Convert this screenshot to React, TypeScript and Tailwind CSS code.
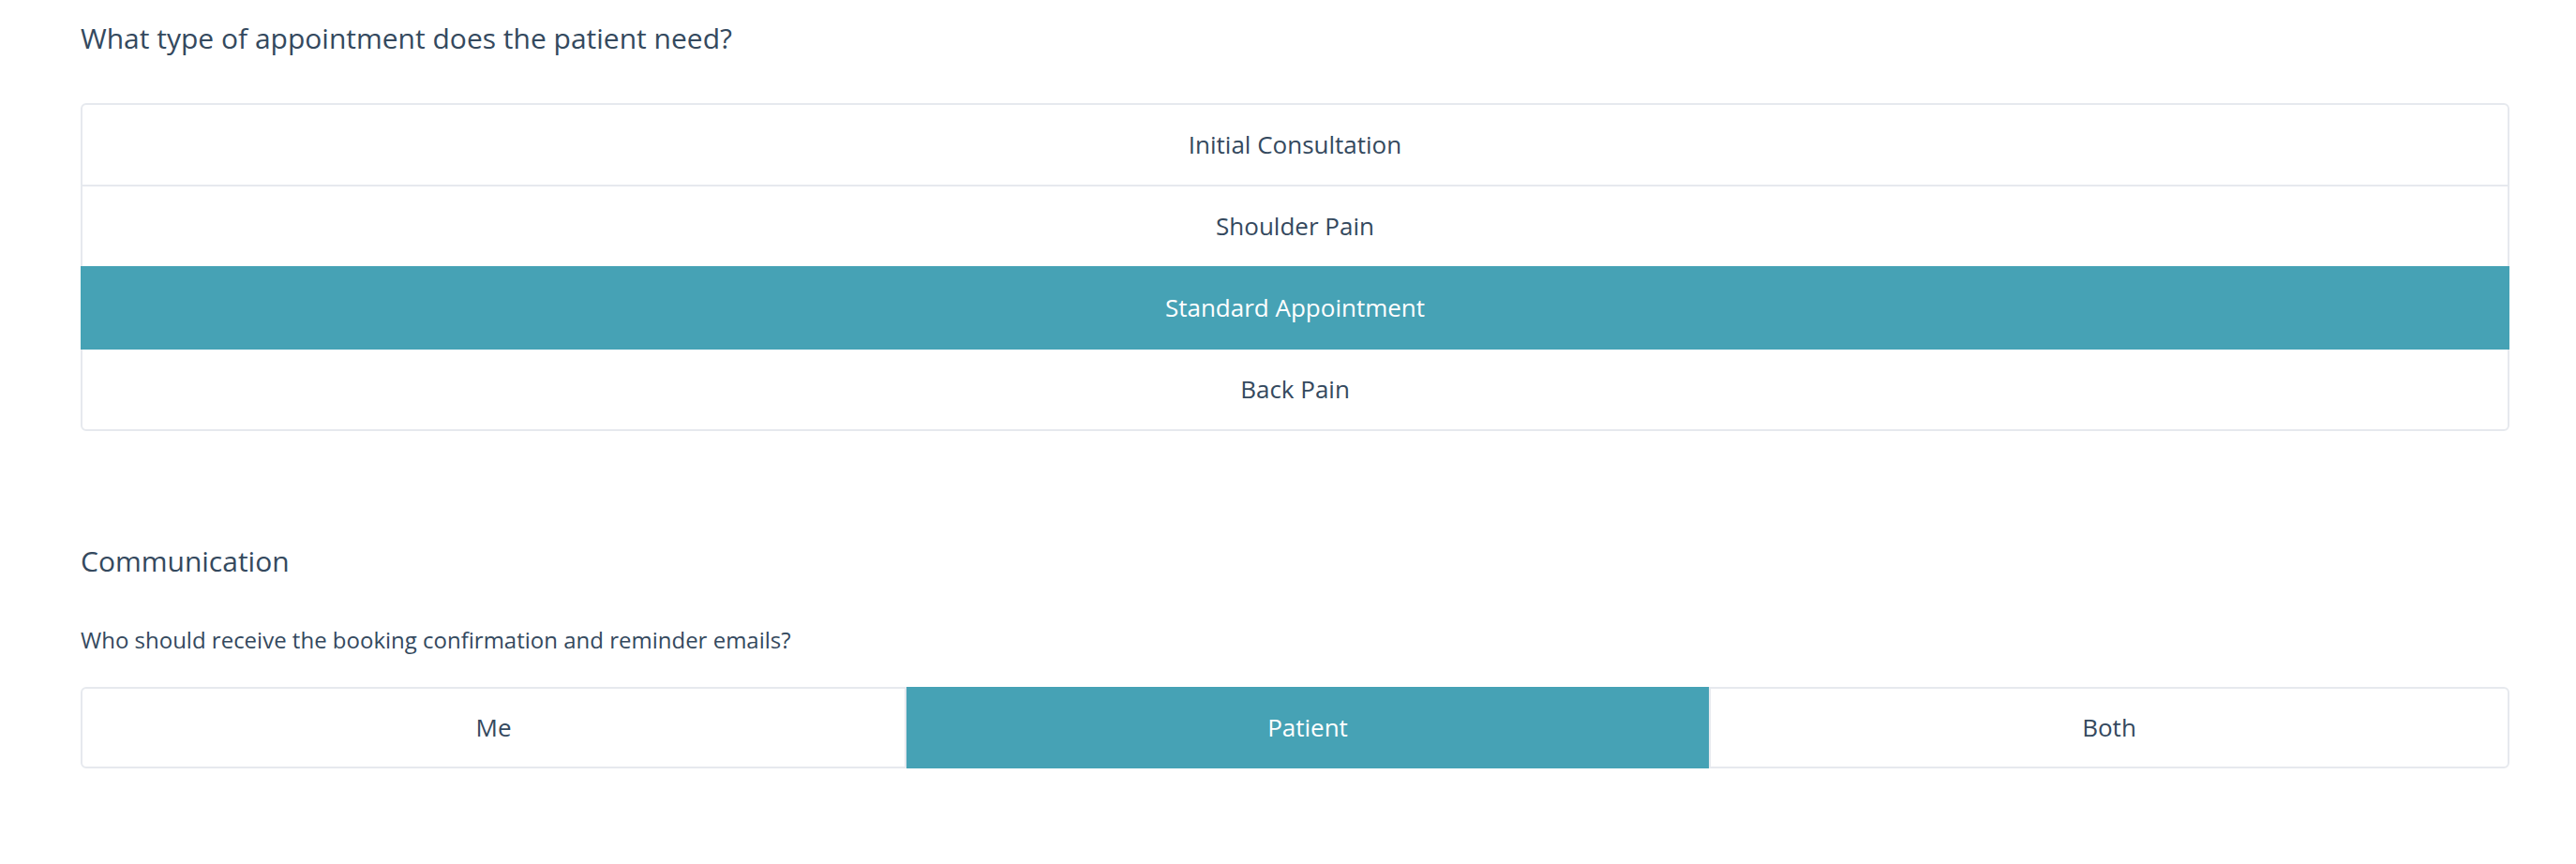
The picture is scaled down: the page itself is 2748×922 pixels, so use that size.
import React from "react";

const options = ["Initial Consultation", "Shoulder Pain", "Standard Appointment", "Back Pain"];

export default function App() {
  return (
    <div
      className="min-h-[922px] bg-white pl-[86px] pr-[71px] text-[#34495e]"
      style={{ fontFamily: '"Open Sans", "Noto Sans", sans-serif' }}
    >
      <div className="pt-[20px] text-[30px] leading-[42px]">What type of appointment does the patient need?</div>

      <div className="mt-[48px] flex flex-col">
        {options.map((o, i) => {
          const active = o === "Standard Appointment";
          const first = i === 0;
          const last = i === options.length - 1;
          return (
            <div
              key={o}
              className={
                "relative flex h-[89px] items-center justify-center border-2 text-[26px] " +
                (i > 0 ? "-mt-[2px] " : "") +
                (first ? "rounded-t-[6px] " : "") +
                (last ? "rounded-b-[6px] " : "") +
                (active
                  ? "z-10 border-[#46a2b5] bg-[#46a2b5] text-white"
                  : "border-[#e6e9ee] bg-white text-[#34495e]")
              }
            >
              {o}
            </div>
          );
        })}
      </div>

      <div className="mt-[118px] text-[30px] leading-[42px]">Communication</div>
      <div className="mt-[46px] text-[24px] leading-[34px]">Who should receive the booking confirmation and reminder emails?</div>

      <div className="mt-[33px] flex h-[87px] text-[26px]">
        <div className="flex w-[881px] items-center justify-center rounded-l-[6px] border-2 border-[#e6e9ee] bg-white">Me</div>
        <div className="flex w-[856px] items-center justify-center border-2 border-[#46a2b5] bg-[#46a2b5] text-white">Patient</div>
        <div className="flex flex-1 items-center justify-center rounded-r-[6px] border-2 border-[#e6e9ee] bg-white">Both</div>
      </div>
    </div>
  );
}
